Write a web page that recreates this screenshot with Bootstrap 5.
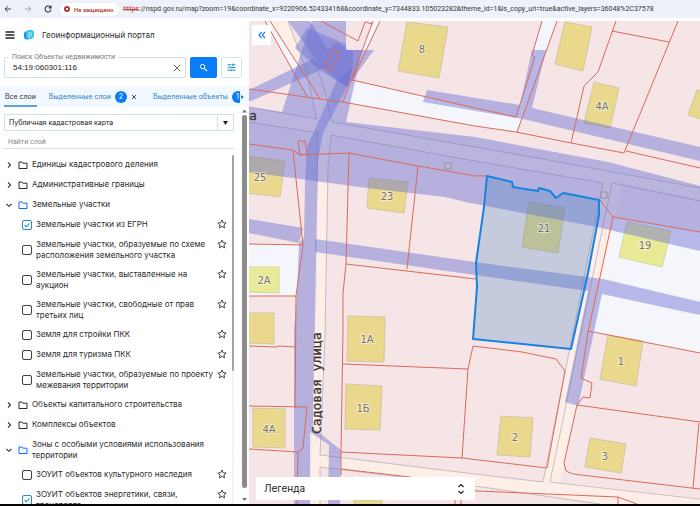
<!DOCTYPE html>
<html lang="ru">
<head>
<meta charset="utf-8">
<meta name="viewport" content="width=device-width, initial-scale=1">
<title>Геоинформационный портал</title>
<link rel="stylesheet" href="https://cdn.jsdelivr.net/npm/bootstrap@5.3.0/dist/css/bootstrap.min.css">
<style>
  body { font-family: Inter, "Liberation Sans", sans-serif; font-size: 8px; line-height: 11px; color: #2c2c2c; background: #fff; }
  svg { display: block; flex: none; }
  button { border: 0; background: none; padding: 0; color: inherit; }
  .browser-bar { background: #edf2fa; height: 18px; margin-bottom: 3px; font-family: Roboto, sans-serif; font-size: 7px; color: #333; }
  .insecure { background: #fff; color: #b3352f; border-radius: 8px; height: 13px; width: 59px; padding-left: 4px; font-size: 6px; font-weight: 600; white-space: nowrap; }
  .address { font-size: 7px; white-space: nowrap; overflow: hidden; }
  .address s { color: #c5443d; }
  .page-end { height: 2px; background: #050505; }
  .side { width: 249px; }
  .portal-head { height: 29px; font-size: 8px; }
  .search-row { padding: 8px 7px 8px 4px; }
  .search-box { border: 1px solid #cfe0ee; border-radius: 2px; height: 21px; }
  .search-box label { position: absolute; top: -6px; left: 4px; padding: 0 3px; background: #fff; font-family: Roboto, sans-serif; font-size: 7px; line-height: 10px; color: #777; }
  .search-box input { border: 0; outline: 0; width: 100%; min-width: 0; padding: 0 8px; font-family: "Liberation Sans", sans-serif; font-size: 8px; color: #222; background: transparent; }
  .btn-find { width: 27px; background: #0a7cf8; border-radius: 2px; }
  .btn-tune { width: 21px; border: 1px solid #d3e4f2; border-radius: 2px; }
  .layer-tabs { background: #f1f8ff; height: 21px; font-size: 7px; padding-left: 4px; color: #2a7fc4; }
  .layer-tabs button { height: 21px; white-space: nowrap; }
  .layer-tabs .tab-active { border-bottom: 2px solid #5d9fd6; color: #333; width: 38px; padding-top: 2px; }
  .count { background: #0a7cf8; color: #fff; width: 12px; height: 12px; border-radius: 50%; font-size: 7px; }
  .cut { width: 8px; overflow: hidden; }
  .theme-box { border: 1px solid #cfe3ea; height: 17px; margin: 7px 9px 0 4px; }
  .theme-box select { appearance: none; border: 0; width: 100%; padding: 0 4px; font-size: 7px; line-height: 15px; color: #222; background: transparent; }
  .theme-arrow { width: 16px; border-left: 1px solid #cfe3ea; pointer-events: none; position: absolute; right: 0; top: 0; bottom: 0; }
  .filter { border: 0; border-bottom: 1px solid #d3e2ea; outline: 0; margin: 5px 9px 6px 4px; padding: 0 4px; height: 13px; font-family: Roboto, sans-serif; font-size: 7px; color: #444; }
  .filter::placeholder { color: #888; }
  .tree { list-style: none; margin: 0; padding: 0; overflow: hidden; white-space: nowrap; }
  .tree li { min-height: 20px; padding: 4px 5px 4px 5px; display: flex; align-items: center; }
  .tree .folder-icon { margin: 0 4px 0 5px; }
  .tree .leaf { padding-left: 22px; }
  .leaf label { margin-left: 4px; }
  .leaf input { appearance: none; flex: none; width: 10px; height: 10px; margin: 0; border: 1px solid #444; border-radius: 2px; outline: 1px solid #4444; outline-offset: -1px; }
  .leaf input:checked { border-color: #2e8bd0; outline-color: #2e8bd055; background: url("data:image/svg+xml,%3Csvg xmlns='http://www.w3.org/2000/svg' viewBox='0 0 8 8'%3E%3Cpath d='M1.6 4l1.7 1.8L6.6 2.4' fill='none' stroke='%232e8bd0' stroke-width='1.1'/%3E%3C/svg%3E") center/8px no-repeat; }
  .star { align-self: flex-start; margin-left: auto; }
  .inner-rail { width: 2px; background: #eef4f9; }
  .inner-thumb { height: 62%; background: #a2a4a8; border-radius: 1px; }
  .outer-rail { width: 15px; padding-right: 2px; }
  .outer-thumb { width: 5px; background: #8c8c8c; border-radius: 3px; }
  .map { background: #f5e5e6; }
  .collapse-btn { position: absolute; left: 3px; top: 4px; width: 19px; height: 20px; background: #fff; border-radius: 2px; }
  .legend { position: absolute; left: 7px; bottom: 4px; width: 219px; height: 23px; background: #fff; color: #222; font-size: 10px; padding: 0 10px 0 8px; }
  .house { fill: #ead98d; stroke: #d3c7a0; stroke-width: 1; }
  .house-alt { fill: #e9ea95; stroke: #d3d3a8; }
  .zone { fill: #686ed2; fill-opacity: .45; }
  .edge { fill: none; stroke: #db6a5a; stroke-width: 1; }
  .kerb { fill: none; stroke: #8a8290; stroke-opacity: .45; stroke-width: 1; }
  .nums { font-family: "DejaVu Sans", sans-serif; font-size: 10px; fill: #77726e; stroke: #fff; stroke-opacity: .5; stroke-width: 2; paint-order: stroke; text-anchor: middle; }
  .street { font-family: "DejaVu Sans Mono", monospace; font-size: 13px; fill: #3a3433; stroke: #3a3433; stroke-width: .3; }
</style>
<script src="https://cdn.jsdelivr.net/npm/bootstrap@5.3.0/dist/js/bootstrap.bundle.min.js"></script>
</head>
<body class="vh-100 d-flex flex-column overflow-hidden">

<svg width="0" height="0" class="position-absolute">
  <symbol id="star" viewBox="0 0 10 10"><path d="M5 1l1.2 2.7 2.9.3-2.2 2 .7 2.9L5 7.4 2.400 8.900l.7-2.900-2.200-2 2.900-.3z" fill="none" stroke="#333" stroke-width=".9" stroke-linejoin="round"/></symbol>
  <symbol id="folder" viewBox="0 0 10 10"><path d="M1 2h3l1 1.200h4V8.500H1z" fill="none" stroke="currentColor" stroke-width="1" stroke-linejoin="round"/></symbol>
  <symbol id="right" viewBox="0 0 8 8"><path d="M3 1.500L5.500 4 3 6.500" fill="none" stroke="#333" stroke-width="1.100"/></symbol>
  <symbol id="down" viewBox="0 0 8 8"><path d="M1.500 3L4 5.300 6.500 3" fill="none" stroke="#333" stroke-width="1.100"/></symbol>
</svg>

<header class="browser-bar d-flex align-items-center flex-shrink-0">
  <button class="ms-1" aria-label="Назад"><svg width="8" height="8" viewBox="0 0 8 8"><path d="M7 4H1M3.800 1.200L1 4l2.800 2.800" fill="none" stroke="#444"/></svg></button>
  <button class="ms-2 ps-1" aria-label="Вперёд"><svg width="8" height="8" viewBox="0 0 8 8"><path d="M1 4h6M4.200 1.200L7 4 4.200 6.800" fill="none" stroke="#aaa"/></svg></button>
  <button class="ms-2 ps-1" aria-label="Обновить"><svg width="8" height="8" viewBox="0 0 8 8"><path d="M6.600 2.400A3 3 0 1 0 7 4.600M7 .6v2.300H4.700" fill="none" stroke="#333" stroke-width="1.100"/></svg></button>
  <span class="insecure d-flex align-items-center ms-2 gap-1 flex-shrink-0 me-1">
    <svg width="6" height="6" viewBox="0 0 6 6"><circle cx="3" cy="3" r="3" fill="#b3352f"/><path d="M2 2l2 2M4 2L2 4" stroke="#fff" stroke-width=".9"/></svg>Не защищено</span>
  <span class="address"><s>https</s>://nspd.gov.ru/map?zoom=19&amp;coordinate_x=9220906.524334168&amp;coordinate_y=7344833.105023282&amp;theme_id=1&amp;is_copy_url=true&amp;active_layers=36048%2C37578</span>
</header>

<main class="d-flex flex-grow-1 overflow-hidden">
  <aside class="side d-flex flex-column flex-shrink-0">
    <div class="portal-head d-flex align-items-center ps-1">
      <button aria-label="Меню"><svg width="12" height="12" viewBox="0 0 12 12"><path d="M1.500 3h9M1.500 6h9M1.500 9h9" stroke="#222" stroke-width="1.400"/></svg></button>
      <svg width="10" height="10" viewBox="0 0 10 10" class="ms-2 ps-0 me-2"><path d="M0 4a3 3 0 0 1 2.500-3v5.500L5 9.500H3A3 3 0 0 1 0 6.500z" fill="#1a8df0"/><path d="M2 3a3 3 0 0 1 3-3h2a3 3 0 0 1 3 3v2a4 4 0 0 1-4 4H4a2 2 0 0 1-2-2z" fill="#3cc5ee"/><path d="M4 3h4M4 4.800h4M4 6.500h2.500" stroke="#e8faff" stroke-width=".7"/></svg>
      <span>Геоинформационный портал</span>
    </div>

    <div class="search-row d-flex gap-1">
      <div class="search-box position-relative d-flex align-items-center flex-grow-1">
        <label for="q">Поиск Объекты недвижимости</label>
        <input id="q" type="text" value="54:19:060301:116">
        <button class="me-1" aria-label="Очистить"><svg width="8" height="8" viewBox="0 0 8 8"><path d="M.8.8l6.400 6.400M7.200.8L.8 7.200" stroke="#555" stroke-width=".9"/></svg></button>
      </div>
      <button class="btn-find d-flex align-items-center justify-content-center" aria-label="Найти"><svg width="9" height="9" viewBox="0 0 9 9"><circle cx="3.600" cy="3.600" r="2.200" fill="none" stroke="#fff"/><path d="M5.300 5.300l2.700 2.700" stroke="#fff" stroke-width="1.200"/></svg></button>
      <button class="btn-tune d-flex align-items-center justify-content-center" aria-label="Фильтры"><svg width="9" height="9" viewBox="0 0 9 9"><path d="M.5 1.800h4M6 1.800h2.500M5.700.6V3M.5 4.500H2M4 4.500h4.500M3 3.300v2.400M.5 7.200H4M5.500 7.200h3M4.800 6v2.400" stroke="#1c8ad8" fill="none"/></svg></button>
    </div>

    <nav class="layer-tabs d-flex align-items-center">
      <button class="tab-active">Все слои</button>
      <button class="d-flex align-items-center ms-2 ps-1">Выделенные слои<span class="count d-flex align-items-center justify-content-center ms-1">2</span></button>
      <button class="ms-1" aria-label="Закрыть"><svg width="6" height="6" viewBox="0 0 6 6"><path d="M1 1l4 4M5 1L1 5" stroke="#333" stroke-width=".9"/></svg></button>
      <button class="d-flex align-items-center ms-3">Выделенные объекты<span class="cut ms-1"><span class="count d-flex align-items-center ps-1">1</span></span></button>
      <svg width="5" height="6" viewBox="0 0 5 6" class="ms-auto me-1"><path d="M1 1l3 2-3 2z" fill="#2a7fc4"/></svg>
    </nav>

    <div class="d-flex flex-grow-1 overflow-hidden">
      <div class="d-flex flex-column flex-grow-1 overflow-hidden">
        <div class="theme-box position-relative me-0">
          <select aria-label="Тема карты"><option>Публичная кадастровая карта</option></select>
          <span class="theme-arrow d-flex align-items-center justify-content-center"><svg width="5" height="4" viewBox="0 0 5 4"><path d="M0 0h5L2.500 4z" fill="#222"/></svg></span>
        </div>
        <input class="filter me-0" type="text" placeholder="Найти слой" aria-label="Найти слой">
        <div class="d-flex flex-grow-1 overflow-hidden">
          <ul class="tree flex-grow-1">
            <li><svg width="8" height="8"><use href="#right"/></svg><svg width="10" height="10" class="folder-icon"><use href="#folder"/></svg><span>Единицы кадастрового деления</span></li>
            <li><svg width="8" height="8"><use href="#right"/></svg><svg width="10" height="10" class="folder-icon"><use href="#folder"/></svg><span>Административные границы</span></li>
            <li><svg width="8" height="8"><use href="#down"/></svg><svg width="10" height="10" class="folder-icon text-primary"><use href="#folder"/></svg><span>Земельные участки</span></li>
            <li class="leaf"><input type="checkbox" id="c1" checked><label for="c1">Земельные участки из ЕГРН</label><button class="star" aria-label="В избранное"><svg width="10" height="10"><use href="#star"/></svg></button></li>
            <li class="leaf"><input type="checkbox" id="c2"><label for="c2">Земельные участки, образуемые по схеме<br>расположения земельного участка</label><button class="star" aria-label="В избранное"><svg width="10" height="10"><use href="#star"/></svg></button></li>
            <li class="leaf"><input type="checkbox" id="c3"><label for="c3">Земельные участки, выставленные на<br>аукцион</label><button class="star" aria-label="В избранное"><svg width="10" height="10"><use href="#star"/></svg></button></li>
            <li class="leaf"><input type="checkbox" id="c4"><label for="c4">Земельные участки, свободные от прав<br>третьих лиц</label><button class="star" aria-label="В избранное"><svg width="10" height="10"><use href="#star"/></svg></button></li>
            <li class="leaf"><input type="checkbox" id="c5"><label for="c5">Земля для стройки ПКК</label><button class="star" aria-label="В избранное"><svg width="10" height="10"><use href="#star"/></svg></button></li>
            <li class="leaf"><input type="checkbox" id="c6"><label for="c6">Земля для туризма ПКК</label><button class="star" aria-label="В избранное"><svg width="10" height="10"><use href="#star"/></svg></button></li>
            <li class="leaf"><input type="checkbox" id="c7"><label for="c7">Земельные участки, образуемые по проекту<br>межевания территории</label><button class="star" aria-label="В избранное"><svg width="10" height="10"><use href="#star"/></svg></button></li>
            <li><svg width="8" height="8"><use href="#right"/></svg><svg width="10" height="10" class="folder-icon"><use href="#folder"/></svg><span>Объекты капитального строительства</span></li>
            <li><svg width="8" height="8"><use href="#right"/></svg><svg width="10" height="10" class="folder-icon"><use href="#folder"/></svg><span>Комплексы объектов</span></li>
            <li><svg width="8" height="8"><use href="#down"/></svg><svg width="10" height="10" class="folder-icon text-primary"><use href="#folder"/></svg><span>Зоны с особыми условиями использования<br>территории</span></li>
            <li class="leaf"><input type="checkbox" id="c8"><label for="c8">ЗОУИТ объектов культурного наследия</label><button class="star" aria-label="В избранное"><svg width="10" height="10"><use href="#star"/></svg></button></li>
            <li class="leaf"><input type="checkbox" id="c9" checked><label for="c9">ЗОУИТ объектов энергетики, связи,<br>транспорта</label><button class="star" aria-label="В избранное"><svg width="10" height="10"><use href="#star"/></svg></button></li>
          </ul>
          <div class="inner-rail flex-shrink-0"><div class="inner-thumb"></div></div>
        </div>
      </div>
      <div class="outer-rail d-flex flex-column align-items-end flex-shrink-0">
        <svg width="5" height="8" viewBox="0 0 5 8"><path d="M0 5.500L2.500 2.500 5 5.500z" fill="#777"/></svg>
        <div class="outer-thumb flex-grow-1"></div>
        <svg width="5" height="16" viewBox="0 0 5 16"><path d="M0 10l2.500 3L5 10z" fill="#777"/></svg>
      </div>
    </div>
  </aside>

  <section class="map flex-grow-1 position-relative overflow-hidden">
    <svg class="w-100 h-100" viewBox="249 21 451 483" preserveAspectRatio="xMinYMin slice" role="img" aria-label="Кадастровая карта">
      <rect x="249" y="21" width="451" height="483" fill="#f5e5e6"/>
      <!-- unassigned land -->
      <g fill="#f5f5fc">
        <path d="M343 102L373 21h7L352 80l123 28 41 9 19-60-3-2 10-34h15l-40 111-42-6z"/>
        <path d="M265 21h5l50 78-12-2z"/>
        <path d="M249 244l54 1-7 51h-47z"/>
        <path d="M613 217l87 15v121l-112-22z"/>
      </g>
      <!-- roads -->
      <g fill="#fdeee8">
        <path d="M270 21h18l17 46 12 52-67-12v15l68 11-1 150-7 221h10V467l155 19 125 18h110v-5l-150-17 62-299 88 18v-13L548 160 332 122l-7-30-5 7z"/>
        <path d="M331 135l144 26 128 22-60 299-223-27 5-120 3-168z" fill="#f5e5e6"/>
      </g>
      <g class="kerb">
        <path d="M249 107l68 12-12-52-17-46M312 53l13 39 7 30 143 25 73 13 152 28M249 122l69 11-1 50M331 135l144 26 128 22-60 299-68-8-155-19 5-120 3-168zM700 201l-88-18-62 299 150 17M320 504V467l155 19 125 18"/>
      </g>
      <!-- buildings -->
      <g class="house">
        <path d="M407 22l41 5-9 51-41-7zM565 22l27 5-9 44-28-7zM594 82l25 6-9 40-26-5zM697 90l4 1v28l-13-4zM248 156l37 5-5 36-32-4zM369 178l39 4-4 31-37-5zM248 313h26v31l-26-1zM348 316l37 1-1 45-37-1zM346 384l36 2-2 44-35-1zM253 408l32 1v39l-32-1zM354 500h28v6h-28zM501 416l32 2-3 39-33-2zM590 438l36 6-5 29-36-6zM608 335l35 6-7 45-36-7zM529 202l36 6-7 45-36-6z"/>
        <path class="house-alt" d="M248 267h31v26l-31-1zM627 222l44 9-9 36-43-10z"/>
      </g>
      <!-- protected zones -->
      <g class="zone">
        <path d="M249 107l33 5 20-62 10-29h34v29h16l-16 72 129 15 133 25 92 24v65l-103-24-127-24-25-6-78-9-118-16z"/>
        <path d="M337 80l16-13-6 20-24 46-5 27-3 155-2 100v13l28 22-1 54h-12l1-59-19-13v72h-16V330l3-37 2-50 5-5 1-55 2-36z"/>
        <path d="M307 28l39 16v6h28l-27 37-27-17-25-22z"/>
        <path d="M288 21h22l18 29 9-8 11 8h5v17l-6 20-10-7-17-15z"/>
        <path d="M249 90l64-31 12 9-74 33h-2z"/>
        <path d="M249 219l54 9-4 15-50-10zM315 239l160 23 128 17 97 23v13l-98-21-24 112-13-4 23-111-113-16-160-23z"/>
        <path d="M427 90l43 7 50 8 12-55h14l-14 58 168 39v14l-177-42-53-9-47-8z"/>
      </g>
      <!-- parcel boundaries -->
      <g class="edge">
        <path d="M321 21l37 20 7-19 8 2M332 50l8 2-9 19-6-3zM249 89l71 10 23 3 132 24 41 6 55 11 53 10 54-132M669 42l-57-11M616 21l-18 51-14 14-13 57M626 151l74 17M265 21l43 77M270 21l50 78M343 102l30-81M380 21l-28 59 123 28 41 9 19-60-3-2 10-34M557 21l-40 111"/>
        <path d="M249 144l44 6 7 5 49-2 69 13 57 10h11M298 141h7l2 13-7 1zM293 150l1 10 9 85-7 51-1 112M349 153l-3 111-3 29v37l-2 123v22M346 264l130 15M418 166l-11 103M249 244l54 1M249 296h47M249 346l27 1 3-1 16 1M249 406l58 1-4 41-5 4-49-3M298 452l-1 52M343 364l125 5M473 346l-5 23-6 89M341 452l121 6 85 10 18-97-9-12-34-7-49-6M341 469l69 8 67 14 141 6 19 7M618 497v7M455 500v4M461 500v4"/>
        <path d="M600 200l13 17 87 15M613 217l-25 115-7 46 11 5-2 15-7-1-6 8-13 58 2 8 7 3 127 15M588 331l112 22M577 405l123 17M699 423l-6 65"/>
      </g>
      <g fill="#c4bfd0" fill-opacity=".5" stroke="#8f8c9c" stroke-width=".8"><rect x="445" y="163" width="6" height="6"/><rect x="601" y="192" width="6" height="6"/></g>
      <!-- selected parcel -->
      <path d="M487 176l25 6 1 5 12 2 13 2 1-3 11 3 6 7 7-5 36 7v15l-11 58-17 76-98-10 4-52-1-24 8-56z" fill="#397cbe" fill-opacity=".25" stroke="#1683e0" stroke-width="2" stroke-linejoin="round"/>
      <g class="nums">
        <text x="422" y="53">8</text><text x="602" y="110">4А</text><text x="260" y="181">25</text><text x="387" y="200">23</text>
        <text x="264" y="284">2А</text><text x="367" y="343">1А</text><text x="363" y="412">1Б</text><text x="269" y="433">4А</text>
        <text x="515" y="441">2</text><text x="605" y="460">3</text><text x="621" y="365">1</text><text x="544" y="232">21</text><text x="645" y="249">19</text>
      </g>
      <text class="street" transform="translate(321 434) rotate(-90)">Садовая улица</text>
      <text class="street" x="249" y="120">а</text>
    </svg>
    <button class="collapse-btn d-flex align-items-center justify-content-center" aria-label="Свернуть панель"><svg width="8" height="8" viewBox="0 0 8 8"><path d="M3.700 1L1 4l2.700 3M7 1L4.300 4 7 7" fill="none" stroke="#1c7fe0" stroke-width="1.200"/></svg></button>
    <button class="legend d-flex align-items-center justify-content-between"><span>Легенда</span><svg width="8" height="12" viewBox="0 0 8 12"><path d="M1.500 4L4 1.500 6.500 4M1.500 8L4 10.500 6.500 8" fill="none" stroke="#222" stroke-width="1.200"/></svg></button>
  </section>
</main>
<div class="page-end flex-shrink-0"></div>
</body>
</html>
